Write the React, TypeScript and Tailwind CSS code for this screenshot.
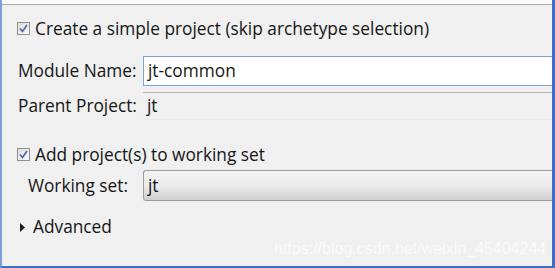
const font = { fontFamily: '"Open Sans", "Noto Sans", sans-serif' };

function CheckBox() {
  return (
    <div className="w-[13px] h-[13px] border border-[#8e8f8f] bg-gradient-to-br from-[#dcdcdc] to-[#fbfbfb] flex items-center justify-center shrink-0">
      <svg width="9" height="9" viewBox="0 0 9 9">
        <path d="M1 4.5 L3.5 7.5 L8 1" fill="none" stroke="#4d61a6" strokeWidth="1.6" />
      </svg>
    </div>
  );
}

export default function App() {
  return (
    <div
      className="relative w-[555px] h-[268px] bg-[#f0f0f0] border-l-2 border-l-[#7aa0d8] border-r-[3px] border-r-[#3f6fc4] border-b-2 border-b-[#3f6fc4] overflow-hidden text-[#151515]"
      style={font}
    >
      <div className="h-[5px] bg-[#f9f9f9] border-b border-b-[#a8a8a8]" />

      <div className="flex items-center gap-[5px] pl-[15px] mt-[16px] h-[15px]">
        <CheckBox />
        <span className="text-[17.3px] leading-none">Create a simple project (skip archetype selection)</span>
      </div>

      <div className="flex items-center mt-[20px] h-[30px]">
        <span className="w-[141px] pl-[16px] text-[17.3px]">Module Name:</span>
        <div className="flex-1 h-[30px] bg-white border border-[#7aa2d2] border-r-0 flex items-center pl-[4px] text-[17.3px]">
          jt-common
        </div>
      </div>

      <div className="flex items-center mt-[6px] h-[28px]">
        <span className="w-[141px] pl-[16px] text-[17.3px]">Parent Project:</span>
        <div className="flex-1 h-[28px] border-t border-t-[#b4b4bc] border-b border-b-[#e6ebf2] flex items-center pl-[4px] text-[17.3px]">
          jt
        </div>
      </div>

      <div className="flex items-center gap-[5px] pl-[15px] mt-[27px] h-[15px]">
        <CheckBox />
        <span className="text-[17.3px] leading-none">Add project(s) to working set</span>
      </div>

      <div className="flex items-center mt-[8px] h-[31px]">
        <span className="w-[141px] pl-[26px] text-[17.3px]">Working set:</span>
        <div className="flex-1 h-[31px] rounded-l-[3px] border border-[#9c9c9c] border-r-0 bg-gradient-to-b from-[#f2f2f2] via-[#ebebeb] to-[#d0d0d0] flex items-center pl-[4px] text-[17.3px]">
          jt
        </div>
      </div>

      <div className="flex items-center gap-[8px] pl-[18px] mt-[16px] h-[20px]">
        <svg width="5" height="9" viewBox="0 0 5 9">
          <path d="M0 0 L5 4.5 L0 9 Z" fill="#1a1a1a" />
        </svg>
        <span className="text-[17.3px]">Advanced</span>
      </div>

      <div
        className="absolute left-[272px] top-[241px] text-[16px] text-white/70 leading-none"
        style={{ fontFamily: '"Liberation Sans", Arial, sans-serif' }}
      >
        https://blog.csdn.net/weixin_45404244
      </div>
    </div>
  );
}
